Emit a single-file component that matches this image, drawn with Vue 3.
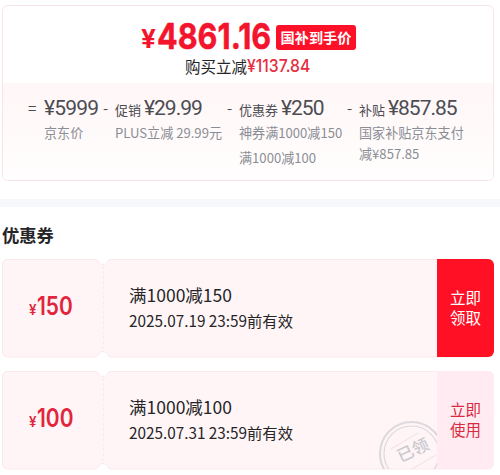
<script setup>
const parts = [
  { sign: '=', label: '', value: '5999', notes: ['京东价'], cls: 'base' },
  { sign: '-', label: '促销', value: '29.99', notes: ['PLUS立减 29.99元'], cls: 'promo' },
  { sign: '-', label: '优惠券', value: '250', notes: ['神券满1000减150', '满1000减100'], cls: 'voucher' },
  { sign: '-', label: '补贴', value: '857.85', notes: ['国家补贴京东支付', '减¥857.85'], cls: 'subsidy' },
]
const coupons = [
  { amount: 150, title: '满1000减150', date: '2025.07.19 23:59前有效', action: ['立即', '领取'], claimed: false },
  { amount: 100, title: '满1000减100', date: '2025.07.31 23:59前有效', action: ['立即', '使用'], claimed: true },
]
</script>

<template>
  <main class="page">
    <section class="summary">
      <header class="head">
        <div class="final">
          <span class="yen">¥</span><span class="price">4861.16</span>
          <span class="tag">国补到手价</span>
        </div>
        <div class="saved">购买立减<b>¥1137.84</b></div>
      </header>
      <div class="formula">
        <div v-for="p in parts" :key="p.value" class="part" :class="p.cls">
          <span class="sign">{{ p.sign }}</span>
          <div class="body">
            <div class="sum"><span v-if="p.label" class="label">{{ p.label }}</span><span class="value">¥{{ p.value }}</span></div>
            <div v-for="n in p.notes" :key="n" class="note">{{ n }}</div>
          </div>
        </div>
      </div>
    </section>
    <div class="band"></div>
    <h2 class="title">优惠券</h2>
    <article v-for="c in coupons" :key="c.amount" class="coupon" :class="{ claimed: c.claimed }">
      <svg class="shape" width="492" height="99" viewBox="0 0 492 99">
        <path d="M6 .5H93C97 .5 96 5.500 101 5.500S105 .5 109 .5H486Q491.500 .5 491.500 6V92Q491.500 98 486 98H109C105 98 106 92.500 101 92.500S97 98 93 98H6Q.5 98 .5 92V6Q.5 .5 6 .5Z" fill="#fff5f6" stroke="#fbe8eb" />
        <path d="M101.500 7V92" stroke="#fbe9ec" stroke-dasharray="3 2" />
      </svg>
      <svg v-if="c.claimed" class="stamp" width="60" height="49" viewBox="0 0 60 49">
        <g fill="none" stroke="#dcd9dd">
          <circle cx="33.500" cy="33.500" r="31.500" stroke-width="2" />
          <circle cx="33.500" cy="33.500" r="27.500" stroke-width="1.200" />
          <path d="M13 29L40 13M34 49L58 35" stroke="#f0dfe2" />
        </g>
        <text x="35" y="36" text-anchor="middle" transform="rotate(-25 35 30)">已领</text>
      </svg>
      <div class="amount"><span>¥</span><b>{{ c.amount }}</b></div>
      <div class="info">
        <div class="name">{{ c.title }}</div>
        <div class="date">{{ c.date }}</div>
      </div>
      <button class="action"><span v-for="a in c.action" :key="a">{{ a }}</span></button>
    </article>
  </main>
</template>

<style>
body { margin: 0; background: #fff; }
</style>

<style scoped>
.page { width: 500px; height: 475px; box-sizing: border-box; padding-top: 5px; overflow: hidden; font-family: "Noto Sans CJK SC", sans-serif; color: #252527; white-space: nowrap; }
.summary { box-sizing: border-box; width: 492px; height: 176px; margin-left: 2px; border: 1px solid #f5e5e8; border-radius: 6px; overflow: hidden; }
.head { height: 77px; }
.final { display: flex; height: 49px; padding: 12px 0 0 138px; box-sizing: border-box; font-family: Inter, sans-serif; font-weight: 700; color: #f3152d; }
.yen { width: 16px; font-size: 25px; line-height: 42px; transform: scaleX(1.05); transform-origin: left; }
.price { width: 119px; font-size: 36px; line-height: 36px; transform: scaleX(.85); transform-origin: left; -webkit-text-stroke: .5px #f3152d; }
.tag { margin-top: 7px; width: 80px; height: 25px; border-radius: 3px; background: #fc1128; color: #fff; font: 700 14.200px/25px "Noto Sans CJK SC", sans-serif; text-align: center; }
.saved { display: flex; padding-left: 182px; font-size: 15.500px; line-height: 23px; }
.saved b { font: 500 17.300px/22px Inter, sans-serif; color: #e52c40; transform: scaleX(.91); transform-origin: left; }
.formula { display: flex; height: 97px; padding-top: 13px; box-sizing: border-box; background: linear-gradient(#fff6f7, #fffcfc 75%, #fffdfd); color: #4c4c52; }
.part { display: flex; flex: none; }
.base { width: 75px; padding-left: 25px; }
.promo { width: 124px; }
.voucher { width: 120px; }
.sign { width: 12px; font-size: 15px; line-height: 24px; }
.base .sign { width: 16px; }
.sum { display: flex; align-items: baseline; height: 24px; line-height: 24px; }
.label { margin-right: 3px; font-size: 13px; }
.value { font: 400 21px/24px Roboto, sans-serif; letter-spacing: -1px; }
.base .value { letter-spacing: -.8px; }
.note { height: 25px; font-size: 13.100px; line-height: 25px; color: #8b8d95; }
.subsidy .note { height: 21px; }
.band { height: 8px; margin-top: 18px; background: #f7f8fc; }
.title { height: 52px; margin: 0 0 0 2px; font-size: 17.300px; line-height: 55px; font-weight: 700; }
.coupon { position: relative; display: flex; width: 492px; height: 99px; margin: 0 0 12.500px 2px; }
.shape { position: absolute; left: 0; top: 0; }
.stamp { position: absolute; left: 376px; top: 49px; }
.stamp text { font-size: 16.500px; font-weight: 500; fill: #c9c9cf; }
.amount, .info, .action { position: relative; }
.amount { display: flex; align-items: baseline; width: 100px; padding-left: 27px; box-sizing: border-box; font: 600 25.500px/94px Inter, sans-serif; color: #e1253c; }
.amount span { font-size: 14px; width: 8px; transform: scaleX(.95); transform-origin: left; }
.amount b { font-weight: 600; transform: scaleX(.82); transform-origin: left; }
.info { width: 335px; padding: 22px 0 0 27px; box-sizing: border-box; }
.name { height: 27px; font-size: 17.500px; line-height: 27px; }
.date { height: 25px; font-size: 15.300px; line-height: 25px; }
.action { display: flex; flex-direction: column; justify-content: center; align-items: center; width: 57px; height: 98px; padding: 0 0 2px; box-sizing: border-box; border: 0; border-radius: 0 6px 6px 0; background: #ff1025; color: #fff; font: 400 15.500px/20px "Noto Sans CJK SC", sans-serif; }
.claimed .action { background: #ffebf1; color: #d92b40; }
</style>
